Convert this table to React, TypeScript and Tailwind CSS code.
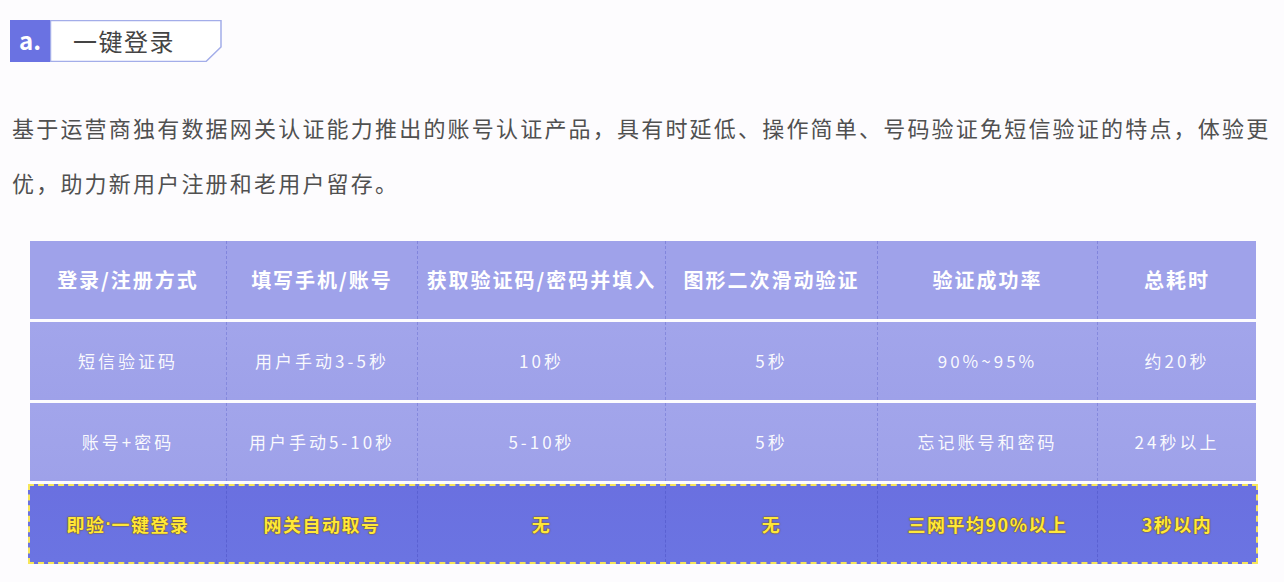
const rows = [
  ['短信验证码', '用户手动3-5秒', '10秒', '5秒', '90%~95%', '约20秒'],
  ['账号+密码', '用户手动5-10秒', '5-10秒', '5秒', '忘记账号和密码', '24秒以上'],
];

const headers = ['登录/注册方式', '填写手机/账号', '获取验证码/密码并填入', '图形二次滑动验证', '验证成功率', '总耗时'];
const highlight = ['即验·一键登录', '网关自动取号', '无', '无', '三网平均90%以上', '3秒以内'];

const cols = 'grid grid-cols-[196px_191px_248px_212px_220px_159px]';
const font = { fontFamily: '"Noto Sans CJK SC", "Noto Sans", sans-serif' };

function Badge() {
  return (
    <div className="flex h-[42px] w-[212px] ml-[10px]">
      <div className="w-[40px] h-full bg-[#6a72e2] flex items-center justify-center text-white text-[24px] font-bold leading-none pb-[2px]">
        a.
      </div>
      <div className="relative flex-1 h-full flex items-center pl-[23px]">
        <svg className="absolute inset-0" width="172" height="42" viewBox="0 0 172 42">
          <polygon points="0.5,0.5 171,0.5 171,27 156,41.5 0.5,41.5" fill="#fff" stroke="#a3ade9" strokeWidth="1.5" />
        </svg>
        <span className="relative text-[24px] tracking-[1.5px] text-[#444] leading-none">一键登录</span>
      </div>
    </div>
  );
}

function Cell({ text }: { text: string }) {
  // the middle dot is narrow in the reference
  if (!text.includes('·')) return <>{text}</>;
  const [a, b] = text.split('·');
  return (
    <>
      {a}
      <span className="font-['Liberation_Sans'] tracking-normal">·</span>
      {b}
    </>
  );
}

export default function App() {
  return (
    <div className="w-[1284px] h-[582px] bg-[#fdfcfe] pt-[20px] overflow-hidden" style={font}>
      <Badge />
      <p className="mt-[38px] pl-[12px] text-[22px] leading-[55px] tracking-[2.2px] text-[#505050]">
        基于运营商独有数据网关认证能力推出的账号认证产品，具有时延低、操作简单、号码验证免短信验证的特点，体验更优，助力新用户注册和老用户留存。
      </p>
      <div className="mt-[31px] ml-[30px] w-[1226px] flex flex-col gap-[3px]">
        <div className={`${cols} h-[78px] bg-[#9fa2ea]`}>
          {headers.map((h, i) => (
            <div
              key={i}
              className={`flex items-center justify-center text-white font-bold text-[20px] tracking-[2px] ${i > 0 ? 'border-l border-dashed border-[#8185dc]' : ''}`}
            >
              {h}
            </div>
          ))}
        </div>
        {rows.map((r, ri) => (
          <div key={ri} className={`${cols} h-[78px] bg-gradient-to-b from-[#a2a5eb] to-[#9ea1e9]`}>
            {r.map((c, i) => (
              <div
                key={i}
                className={`flex items-center justify-center text-white/95 text-[17px] tracking-[3px] ${i > 0 ? 'border-l border-dashed border-[#8589dd]' : ''}`}
              >
                {c}
              </div>
            ))}
          </div>
        ))}
        <div className="grid grid-cols-[196px_191px_248px_212px_220px_159px] h-[80px] -mx-[2px] w-[1230px] border-2 border-dashed border-[#f6e65a] bg-gradient-to-b from-[#6a70e0] to-[#6b74e2]">
          {highlight.map((c, i) => (
            <div
              key={i}
              className={`flex items-center justify-center text-[#ffe83a] font-bold text-[18px] tracking-[1.5px] [text-shadow:0_0_1px_#7a5200,0_0_2px_#7a5200] ${i > 0 ? 'border-l border-dashed border-[#5a61d2]' : ''}`}
            >
              <Cell text={c} />
            </div>
          ))}
        </div>
      </div>
    </div>
  );
}
